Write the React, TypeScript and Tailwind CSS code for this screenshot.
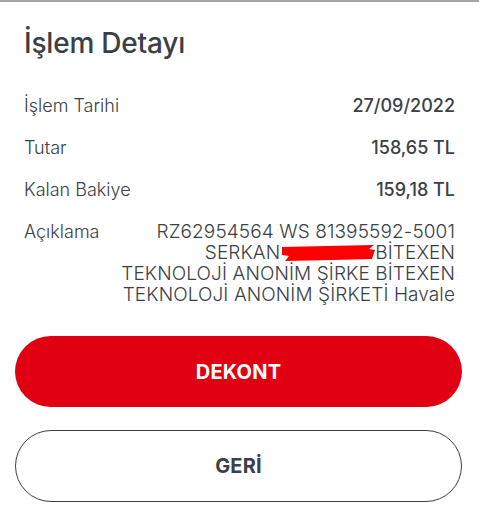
const rows = [
  { label: 'İşlem Tarihi', value: '27/09/2022' },
  { label: 'Tutar', value: '158,65 TL' },
  { label: 'Kalan Bakiye', value: '159,18 TL' },
];

export default function App() {
  return (
    <div className="min-h-[524px] w-[479px] bg-white border-t-2 border-[#a3a3a3] text-[#3a4046]" style={{ fontFamily: 'Inter, "Open Sans", sans-serif' }}>
      <div className="px-6 pt-[23px]">
        <h1 className="text-[28px] leading-[36px] font-medium tracking-[-0.2px]">İşlem Detayı</h1>

        <div className="mt-[33px] flex flex-col gap-[18px]">
          {rows.map((row) => (
            <div key={row.label} className="flex justify-between text-[18px] leading-[24px]">
              <span className="font-light">{row.label}</span>
              <span className="font-medium">{row.value}</span>
            </div>
          ))}
        </div>

        <div className="mt-[19px] flex justify-between text-[19px] leading-[21px] font-light">
          <span className="text-[18px]">Açıklama</span>
          <p className="text-right tracking-[0.1px]">
            RZ62954564 WS 81395592-5001
            <br />
            SERKAN
            <span className="relative inline-block h-[14px] w-[95px] align-middle">
              {/* red redaction scribble */}
              <svg className="absolute left-[2px] top-[-2px] h-[16px] w-[93px]" viewBox="0 0 93 16">
                <path d="M0 2 L45 1 L92 0 L87 4 L93 5 L90 14 L50 15 L3 16 L7 11 L0 10 Z" fill="#ff0000" />
              </svg>
            </span>
            BİTEXEN
            <br />
            TEKNOLOJİ ANONİM ŞİRKE BİTEXEN
            <br />
            TEKNOLOJİ ANONİM ŞİRKETİ Havale
          </p>
        </div>
      </div>

      <div className="mt-[31px] flex flex-col gap-[23px] pl-[15px] pr-[17px]">
        <button className="h-[71px] w-full rounded-full bg-[#e00012] text-white text-[20px] font-bold tracking-[0.2px]">
          DEKONT
        </button>
        <button className="h-[72px] w-full rounded-full border-[1.5px] border-[#3a4046] bg-white text-[#3a4046] text-[20px] font-bold tracking-[0.2px]">
          GERİ
        </button>
      </div>
    </div>
  );
}
